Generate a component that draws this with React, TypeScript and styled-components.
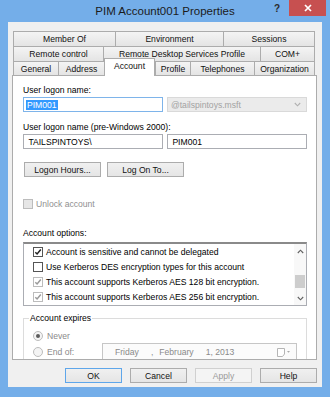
import styled, { createGlobalStyle } from 'styled-components';

type CheckState = 'checked' | 'unchecked' | 'disabledChecked' | 'disabled';

const GlobalStyle = createGlobalStyle`
  html, body {
    margin: 0;
    padding: 0;
    background: #fff;
  }
  body {
    font-family: 'Liberation Sans', Arial, sans-serif;
    font-size: 8.6px;
    color: #000;
  }
  * {
    box-sizing: border-box;
  }
`;

const Frame = styled.div`
  width: 330px;
  height: 397px;
  background: #74aee9;
  display: flex;
  flex-direction: column;
`;

const TitleBar = styled.div`
  height: 22px;
  flex: none;
  display: grid;
  grid-template-columns: 1fr auto 1fr;
  align-items: start;
`;

const Title = styled.div`
  grid-column: 2;
  font-size: 11.5px;
  line-height: 23px;
  color: #1b1b1b;
  white-space: nowrap;
`;

const Caption = styled.div`
  grid-column: 3;
  justify-self: end;
  display: flex;
  align-items: flex-start;
  margin-right: 4px;
`;

const HelpGlyph = styled.span`
  width: 22px;
  margin-right: 1px;
  line-height: 18px;
  text-align: center;
  font-size: 10px;
  font-weight: bold;
  color: #2a2a2a;
`;

const CloseButton = styled.div`
  width: 37px;
  height: 16px;
  background: #c75050;
  display: flex;
  align-items: center;
  justify-content: center;
`;

const Dialog = styled.div`
  flex: 1;
  margin: 0 8px 10px;
  padding: 9px 5px 4px 4px;
  background: #f0f0f0;
  display: flex;
  flex-direction: column;
`;

const TabStrip = styled.div`
  display: flex;
  flex-direction: column;
  padding: 0 2px 0 1px;
`;

const TabRow = styled.div<{ $h: number }>`
  height: ${({ $h }) => $h}px;
  display: flex;
  align-items: stretch;
`;

const Tab = styled.div<{ $w: number; $active?: boolean }>`
  position: relative;
  width: ${({ $w }) => $w}px;
  flex: none;
  display: flex;
  align-items: center;
  justify-content: center;
  white-space: nowrap;
  color: #111;
  border-top: 1px solid #acacac;
  border-left: 1px solid #acacac;
  background: linear-gradient(#f4f4f4, #e4e4e4);
  &:last-child {
    border-right: 1px solid #acacac;
  }
  ${({ $active }) =>
    $active &&
    `
    z-index: 1;
    align-self: flex-end;
    height: 18px;
    margin-bottom: -1px;
    padding-bottom: 3px;
    background: #fff;
    border-right: 1px solid #acacac;
    & + * { border-left: none; }
  `}
`;

const Panel = styled.div`
  height: 285px;
  flex: none;
  padding: 8px 9px 0 10px;
  background: #fff;
  border: 1px solid #acacac;
  overflow: hidden;
  display: flex;
  flex-direction: column;
  & > * {
    flex-shrink: 0;
  }
`;

const Label = styled.div<{ $top?: number }>`
  margin-top: ${({ $top }) => $top ?? 0}px;
  line-height: 12px;
  white-space: nowrap;
`;

const FieldPair = styled.div`
  margin-top: 1px;
  display: grid;
  grid-template-columns: 1fr 1fr;
  column-gap: 4px;
`;

const TextBox = styled.div<{ $focused?: boolean }>`
  height: 15px;
  padding: 0 2px;
  display: flex;
  align-items: center;
  background: #fff;
  border: 1px solid ${({ $focused }) => ($focused ? '#7eb4ea' : '#abadb3')};
  white-space: nowrap;
`;

const Selection = styled.span`
  background: #3399ff;
  color: #fff;
  padding: 0 1px;
  line-height: 10px;
`;

const ComboBox = styled.div`
  height: 15px;
  padding: 0 5px 0 3px;
  display: flex;
  align-items: center;
  justify-content: space-between;
  background: #ebebeb;
  border: 1px solid #d9d9d9;
  color: #a2a2a2;
  white-space: nowrap;
`;

const ButtonRow = styled.div`
  margin-top: 13px;
  padding-left: 1px;
  display: flex;
  gap: 6px;
`;

const PushButton = styled.div<{ $w: number; $kind?: 'default' | 'disabled' }>`
  width: ${({ $w }) => $w}px;
  height: 15px;
  display: flex;
  align-items: center;
  justify-content: center;
  white-space: nowrap;
  background: ${({ $kind }) =>
    $kind === 'disabled' ? '#f4f4f4' : 'linear-gradient(#f0f0f0, #e5e5e5)'};
  border: 1px solid
    ${({ $kind }) => ($kind === 'default' ? '#5ea6ea' : $kind === 'disabled' ? '#d0d0d0' : '#acacac')};
  color: ${({ $kind }) => ($kind === 'disabled' ? '#9a9a9a' : '#111')};
`;

const CheckRow = styled.div<{ $top: number; $disabled?: boolean }>`
  margin-top: ${({ $top }) => $top}px;
  height: 12px;
  display: flex;
  align-items: center;
  gap: 3px;
  color: ${({ $disabled }) => ($disabled ? '#909090' : '#000')};
`;

const Box = styled.span<{ $state: CheckState }>`
  width: 10px;
  height: 10px;
  flex: none;
  display: flex;
  align-items: center;
  justify-content: center;
  border: 1px solid
    ${({ $state }) => ($state === 'checked' || $state === 'unchecked' ? '#555' : '#bcbcbc')};
  background: ${({ $state }) => ($state === 'disabled' ? '#e6e6e6' : '#fff')};
`;

const ListBox = styled.div`
  margin-top: 3px;
  height: 64px;
  display: grid;
  grid-template-columns: 1fr 12px;
  background: #fff;
  border: 1px solid #abadb3;
  border-top: 2px solid #8a8a8a;
`;

const ListItems = styled.div`
  padding-left: 9px;
  display: flex;
  flex-direction: column;
`;

const ListItem = styled.div`
  height: 15px;
  display: flex;
  align-items: center;
  gap: 3px;
  white-space: nowrap;
`;

const ScrollBar = styled.div`
  display: flex;
  flex-direction: column;
  background: #f8f8f8;
`;

const ScrollArrow = styled.div`
  height: 14px;
  display: flex;
  align-items: center;
  justify-content: center;
`;

const ScrollTrack = styled.div`
  flex: 1;
  padding-top: 17px;
`;

const ScrollThumb = styled.div`
  height: 13px;
  margin: 0 1px;
  background: #cdcdcd;
`;

const GroupBox = styled.fieldset`
  margin: 6px 0 0;
  padding: 4px 9px 8px;
  border: 1px solid #dcdcdc;
  min-width: 0;
`;

const Legend = styled.legend`
  margin-left: -4px;
  padding: 0 1px;
  line-height: 12px;
`;

const ExpiryGrid = styled.div`
  display: grid;
  grid-template-columns: 69px 1fr;
  grid-template-rows: 15px 18px;
  align-items: center;
`;

const RadioOption = styled.div`
  display: flex;
  align-items: center;
  gap: 4px;
  color: #8a8a8a;
  white-space: nowrap;
`;

const Radio = styled.span<{ $selected?: boolean }>`
  width: 10px;
  height: 10px;
  border-radius: 50%;
  border: 1px solid #bcbcbc;
  background: #f4f4f4;
  display: flex;
  align-items: center;
  justify-content: center;
  &::after {
    content: '';
    width: 4px;
    height: 4px;
    border-radius: 50%;
    background: ${({ $selected }) => ($selected ? '#5c5c5c' : 'transparent')};
  }
`;

const DatePicker = styled.div`
  height: 18px;
  padding: 0 5px 0 12px;
  display: flex;
  align-items: center;
  border: 1px solid #c6c6c6;
  background: #fbfbfb;
  color: #8a8a8a;
  white-space: nowrap;
`;

const DatePart = styled.span<{ $gap: number }>`
  margin-left: ${({ $gap }) => $gap}px;
`;

const CalendarIcon = styled.svg`
  margin-left: auto;
`;

const ButtonBar = styled.div`
  margin-top: 8px;
  display: flex;
  justify-content: flex-end;
  gap: 8px;
`;

const tabRows = [
  { h: 15, tabs: [['Member Of', 102], ['Environment', 108], ['Sessions', 92]] },
  { h: 15, tabs: [['Remote control', 90], ['Remote Desktop Services Profile', 157], ['COM+', 55]] },
  {
    h: 14,
    tabs: [
      ['General', 45],
      ['Address', 46],
      ['Account', 51],
      ['Profile', 35],
      ['Telephones', 64],
      ['Organization', 61]
    ]
  }
] as const;

const accountOptions: { label: string; state: CheckState }[] = [
  { label: 'Account is sensitive and cannot be delegated', state: 'checked' },
  { label: 'Use Kerberos DES encryption types for this account', state: 'unchecked' },
  { label: 'This account supports Kerberos AES 128 bit encryption.', state: 'disabledChecked' },
  { label: 'This account supports Kerberos AES 256 bit encryption.', state: 'disabledChecked' }
];

const Checkbox = ({ state }: { state: CheckState }) => (
  <Box $state={state}>
    {(state === 'checked' || state === 'disabledChecked') && (
      <svg width="8" height="8" viewBox="0 0 8 8">
        <path
          d="M1.3 4.2 L3.1 6 L6.8 1.6"
          fill="none"
          stroke={state === 'checked' ? '#222' : '#9a9a9a'}
          strokeWidth="1.5"
        />
      </svg>
    )}
  </Box>
);

const Chevron = ({ up, color = '#606060' }: { up?: boolean; color?: string }) => (
  <svg width="7" height="5" viewBox="0 0 7 5">
    <path d={up ? 'M0.8 4 L3.5 1.2 L6.2 4' : 'M0.8 1 L3.5 3.8 L6.2 1'} fill="none" stroke={color} strokeWidth="1.1" />
  </svg>
);

export default function App() {
  return (
    <>
      <GlobalStyle />
      <Frame>
        <TitleBar>
          <Title>PIM Account001 Properties</Title>
          <Caption>
            <HelpGlyph>?</HelpGlyph>
            <CloseButton>
              <svg width="8" height="8" viewBox="0 0 8 8">
                <path d="M1 1 L7 7 M7 1 L1 7" stroke="#fff" strokeWidth="1.7" />
              </svg>
            </CloseButton>
          </Caption>
        </TitleBar>

        <Dialog>
          <TabStrip>
            {tabRows.map((row, i) => (
              <TabRow key={i} $h={row.h}>
                {row.tabs.map(([name, w]) => (
                  <Tab key={name} $w={w} $active={name === 'Account'}>
                    {name}
                  </Tab>
                ))}
              </TabRow>
            ))}
          </TabStrip>

          <Panel>
            <Label>User logon name:</Label>
            <FieldPair>
              <TextBox $focused>
                <Selection>PIM001</Selection>
              </TextBox>
              <ComboBox>
                @tailspintoys.msft
                <Chevron color="#b0b0b0" />
              </ComboBox>
            </FieldPair>

            <Label $top={9}>User logon name (pre-Windows 2000):</Label>
            <FieldPair>
              <TextBox>&nbsp;TAILSPINTOYS\</TextBox>
              <TextBox>&nbsp;PIM001</TextBox>
            </FieldPair>

            <ButtonRow>
              <PushButton $w={77}>Logon Hours...</PushButton>
              <PushButton $w={77}>Log On To...</PushButton>
            </ButtonRow>

            <CheckRow $top={21} $disabled>
              <Checkbox state="disabled" />
              Unlock account
            </CheckRow>

            <Label $top={17}>Account options:</Label>
            <ListBox>
              <ListItems>
                {accountOptions.map(opt => (
                  <ListItem key={opt.label}>
                    <Checkbox state={opt.state} />
                    {opt.label}
                  </ListItem>
                ))}
              </ListItems>
              <ScrollBar>
                <ScrollArrow>
                  <Chevron up />
                </ScrollArrow>
                <ScrollTrack>
                  <ScrollThumb />
                </ScrollTrack>
                <ScrollArrow>
                  <Chevron />
                </ScrollArrow>
              </ScrollBar>
            </ListBox>

            <GroupBox>
              <Legend>Account expires</Legend>
              <ExpiryGrid>
                <RadioOption>
                  <Radio $selected />
                  Never
                </RadioOption>
                <span />
                <RadioOption>
                  <Radio />
                  End of:
                </RadioOption>
                <DatePicker>
                  <span>Friday</span>
                  <DatePart $gap={12}>,</DatePart>
                  <DatePart $gap={6}>February</DatePart>
                  <DatePart $gap={12}>1, 2013</DatePart>
                  <CalendarIcon width="14" height="9" viewBox="0 0 14 9">
                    <path d="M0.5 0.5 H7.5 V6 L5.5 8.5 H0.5 Z" fill="#fff" stroke="#b5b5b5" />
                    <path d="M10 3 H13 L11.5 4.8 Z" fill="#a8a8a8" />
                  </CalendarIcon>
                </DatePicker>
              </ExpiryGrid>
            </GroupBox>
          </Panel>

          <ButtonBar>
            <PushButton $w={57} $kind="default">OK</PushButton>
            <PushButton $w={57}>Cancel</PushButton>
            <PushButton $w={57} $kind="disabled">Apply</PushButton>
            <PushButton $w={57}>Help</PushButton>
          </ButtonBar>
        </Dialog>
      </Frame>
    </>
  );
}
